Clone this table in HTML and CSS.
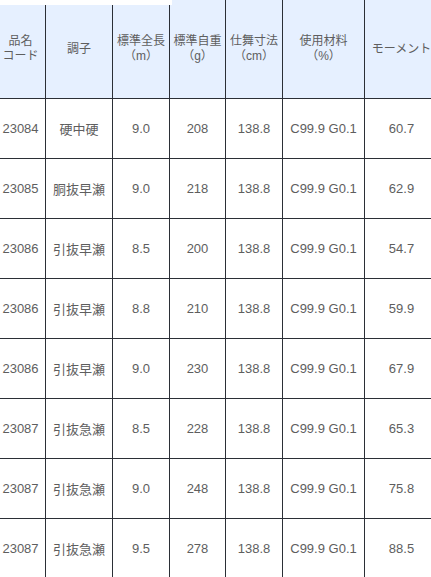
FILE: index.html
```html
<!DOCTYPE html>
<html lang="ja">
<head>
<meta charset="utf-8">
<link rel="stylesheet" href="styles.css">
</head>
<body>
<div class="wrap">
  <table class="spec">
    <colgroup>
      <col class="c1"><col class="c2"><col class="c3"><col class="c4"><col class="c5"><col class="c6"><col class="c7">
    </colgroup>
    <thead>
      <tr>
        <th>品名<br>コード</th>
        <th>調子</th>
        <th>標準全長<br>（m）</th>
        <th>標準自重<br>（g）</th>
        <th>仕舞寸法<br>（cm）</th>
        <th>使用材料<br>（%）</th>
        <th>モーメント</th>
      </tr>
    </thead>
    <tbody>
      <tr><td>23084</td><td>硬中硬</td><td>9.0</td><td>208</td><td>138.8</td><td>C99.9 G0.1</td><td>60.7</td></tr>
      <tr><td>23085</td><td>胴抜早瀬</td><td>9.0</td><td>218</td><td>138.8</td><td>C99.9 G0.1</td><td>62.9</td></tr>
      <tr><td>23086</td><td>引抜早瀬</td><td>8.5</td><td>200</td><td>138.8</td><td>C99.9 G0.1</td><td>54.7</td></tr>
      <tr><td>23086</td><td>引抜早瀬</td><td>8.8</td><td>210</td><td>138.8</td><td>C99.9 G0.1</td><td>59.9</td></tr>
      <tr><td>23086</td><td>引抜早瀬</td><td>9.0</td><td>230</td><td>138.8</td><td>C99.9 G0.1</td><td>67.9</td></tr>
      <tr><td>23087</td><td>引抜急瀬</td><td>8.5</td><td>228</td><td>138.8</td><td>C99.9 G0.1</td><td>65.3</td></tr>
      <tr><td>23087</td><td>引抜急瀬</td><td>9.0</td><td>248</td><td>138.8</td><td>C99.9 G0.1</td><td>75.8</td></tr>
      <tr><td>23087</td><td>引抜急瀬</td><td>9.5</td><td>278</td><td>138.8</td><td>C99.9 G0.1</td><td>88.5</td></tr>
    </tbody>
  </table>
  <div class="mask"></div>
</div>
</body>
</html>
```

FILE: styles.css
```css
html, body {
  margin: 0;
  padding: 0;
  background: #fff;
  overflow: hidden;
}
.wrap {
  position: relative;
  width: 431px;
  height: 577px;
  overflow: hidden;
}
.spec {
  border-collapse: collapse;
  table-layout: fixed;
  width: 443px;
  margin-left: -5px;
  font-family: "Liberation Sans", "Noto Sans CJK JP", sans-serif;
  color: #5e5e5e;
}
.c1 { width: 50px; }
.c2 { width: 67px; }
.c3 { width: 57px; }
.c4 { width: 56px; }
.c5 { width: 57px; }
.c6 { width: 82px; }
.c7 { width: 74px; }
.spec th, .spec td {
  border: 1px solid #2b2f36;
  text-align: center;
  vertical-align: middle;
  padding: 0;
}
.spec thead th {
  border-top: none;
  background: #e6f0ff;
  font-weight: normal;
  font-size: 12px;
  line-height: 15px;
  height: 98px;
}
.spec tbody td {
  font-size: 13px;
  height: 59px;
}
.mask {
  position: absolute;
  left: 0;
  top: 0;
  width: 172px;
  height: 5px;
  background: #fff;
}
```
